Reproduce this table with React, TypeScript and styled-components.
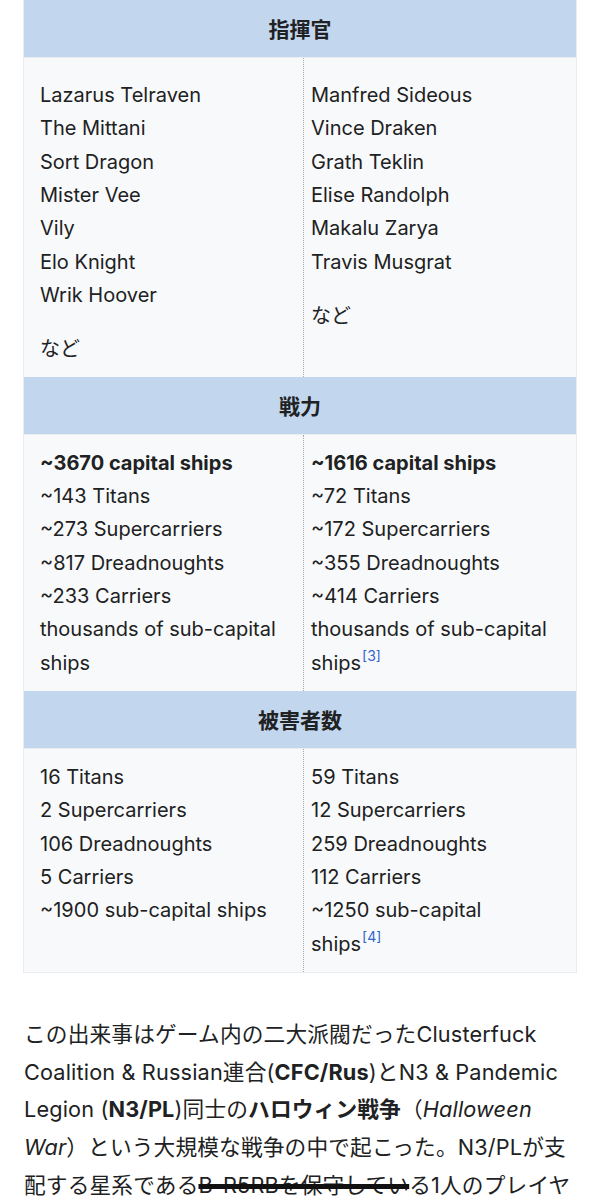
import React from "react";
import styled, { createGlobalStyle } from "styled-components";

const GlobalStyle = createGlobalStyle`
    html, body {
        margin: 0;
        padding: 0;
        background: #ffffff;
    }
    body {
        font-family: "Inter", "Noto Sans CJK JP", sans-serif;
        color: #202122;
    }
`;

const Page = styled.div`
    padding: 0 23px;
`;

const Table = styled.div`
    margin-top: -1px;
    border: 1px solid #eaecf0;
    background: #f8f9fa;
`;

const Header = styled.div`
    background: #c2d6ee;
    text-align: center;
    font-family: "Noto Sans CJK JP", sans-serif;
    font-weight: 700;
    font-size: 21px;
    line-height: 33px;
    padding: 12px 0 12px;
    border-bottom: 1px solid #eaecf0;
`;

const Row = styled.div<{ $top: number; $bottom: number }>`
    display: grid;
    grid-template-columns: 280px 1fr;
    font-size: 20px;
    line-height: 33.33px;
    & > div {
        padding-top: ${(p) => p.$top}px;
        padding-bottom: ${(p) => p.$bottom}px;
    }
`;

const Cell = styled.div<{ $left?: boolean }>`
    padding-left: ${(p) => (p.$left ? 16 : 7)}px;
    padding-right: ${(p) => (p.$left ? 7 : 24)}px;
    border-right: ${(p) => (p.$left ? "1px dotted #a2a9b1" : "none")};
`;

const Line = styled.div<{ $bold?: boolean }>`
    font-weight: ${(p) => (p.$bold ? 700 : 400)};
`;

const Etc = styled.div`
    margin-top: 19px;
    font-family: "Noto Sans CJK JP", sans-serif;
`;

const Ref = styled.sup`
    color: #3366cc;
    font-size: 14px;
    line-height: 1;
    vertical-align: 9px;
    margin-left: 1px;
`;

const Para = styled.p`
    margin: 43px 1px 0;
    font-size: 21.7px;
    line-height: 37.8px;
    letter-spacing: 0.15px;
    font-family: "Inter", "Noto Sans CJK JP", sans-serif;
`;

const Struck = styled.span`
    text-decoration: line-through;
    text-decoration-thickness: 5px;
    text-decoration-color: #111;
`;

const commanders = {
    left: [
        "Lazarus Telraven",
        "The Mittani",
        "Sort Dragon",
        "Mister Vee",
        "Vily",
        "Elo Knight",
        "Wrik Hoover",
    ],
    right: [
        "Manfred Sideous",
        "Vince Draken",
        "Grath Teklin",
        "Elise Randolph",
        "Makalu Zarya",
        "Travis Musgrat",
    ],
};

const strength = {
    left: ["~143 Titans", "~273 Supercarriers", "~817 Dreadnoughts", "~233 Carriers"],
    right: ["~72 Titans", "~172 Supercarriers", "~355 Dreadnoughts", "~414 Carriers"],
};

const losses = {
    left: ["16 Titans", "2 Supercarriers", "106 Dreadnoughts", "5 Carriers", "~1900 sub-capital ships"],
    right: ["59 Titans", "12 Supercarriers", "259 Dreadnoughts", "112 Carriers"],
};

export default function App() {
    return (
        <Page>
            <GlobalStyle />
            <Table>
                <Header>指揮官</Header>
                <Row $top={21} $bottom={12}>
                    <Cell $left>
                        {commanders.left.map((n) => (
                            <Line key={n}>{n}</Line>
                        ))}
                        <Etc>など</Etc>
                    </Cell>
                    <Cell>
                        {commanders.right.map((n) => (
                            <Line key={n}>{n}</Line>
                        ))}
                        <Etc>など</Etc>
                    </Cell>
                </Row>
                <Header>戦力</Header>
                <Row $top={12} $bottom={11}>
                    <Cell $left>
                        <Line $bold>~3670 capital ships</Line>
                        {strength.left.map((n) => (
                            <Line key={n}>{n}</Line>
                        ))}
                        <Line>thousands of sub-capital ships</Line>
                    </Cell>
                    <Cell>
                        <Line $bold>~1616 capital ships</Line>
                        {strength.right.map((n) => (
                            <Line key={n}>{n}</Line>
                        ))}
                        <Line>
                            thousands of sub-capital ships<Ref>[3]</Ref>
                        </Line>
                    </Cell>
                </Row>
                <Header>被害者数</Header>
                <Row $top={12} $bottom={11}>
                    <Cell $left>
                        {losses.left.map((n) => (
                            <Line key={n}>{n}</Line>
                        ))}
                    </Cell>
                    <Cell>
                        {losses.right.map((n) => (
                            <Line key={n}>{n}</Line>
                        ))}
                        <Line>
                            ~1250 sub-capital ships<Ref>[4]</Ref>
                        </Line>
                    </Cell>
                </Row>
            </Table>
            <Para>
                この出来事はゲーム内の二大派閥だったClusterfuck Coalition &amp; Russian連合(
                <b>CFC/Rus</b>)とN3 &amp; Pandemic Legion (<b>N3/PL</b>)同士の
                <b>ハロウィン戦争</b>（<i>Halloween War</i>）という大規模な戦争の中で起こった。N3/PLが支配する星系である
                <Struck>B-R5RBを保守してい</Struck>る1人のプレイヤーが
            </Para>
        </Page>
    );
}
